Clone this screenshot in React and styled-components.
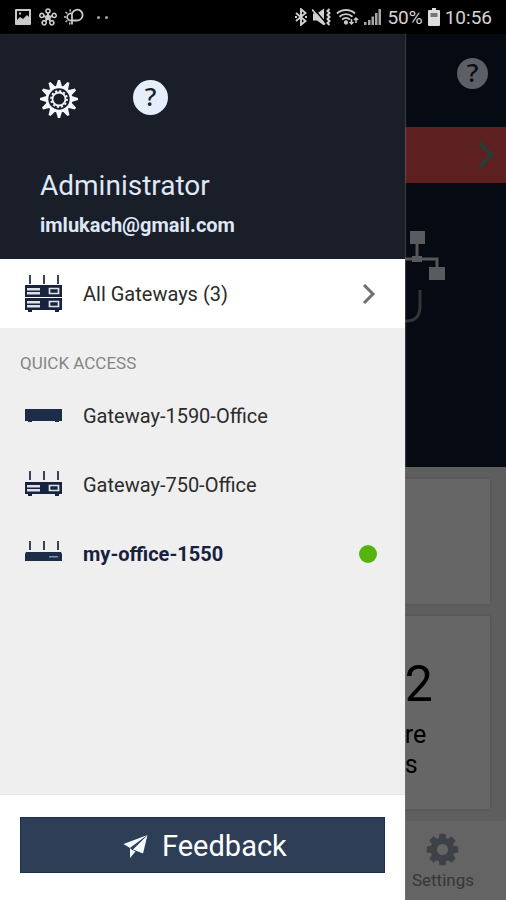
import React from "react";
import styled, { createGlobalStyle } from "styled-components";

const gateways = [
    { name: "Gateway-1590-Office", model: "1590", active: false },
    { name: "Gateway-750-Office", model: "750", active: false },
    { name: "my-office-1550", model: "1550", active: true }
];

const range = (n) => Array.from({ length: n }, (_, i) => i);

function PictureIcon() {
    return (
        <svg width="18" height="18" viewBox="0 0 18 18">
            <path fill="#c9c9c9" fillRule="evenodd" d="M2 1h14a1 1 0 0 1 1 1v14a1 1 0 0 1-1 1H2a1 1 0 0 1-1-1V2a1 1 0 0 1 1-1zM3 3v9l3-3 3 2 4-4 2 2V3zM5 4.500h2v2h-2z" />
        </svg>
    );
}

function FlowerIcon() {
    return (
        <svg width="18" height="18" viewBox="0 0 18 18" fill="none" stroke="#c9c9c9" strokeWidth="1.600">
            {range(5).map((i) => (
                <g key={i} transform={`rotate(${i * 72} 9 9.500)`}>
                    <path d="M9 9.500V5" strokeWidth="2" />
                    <circle cx="9" cy="3" r="2" />
                </g>
            ))}
            <circle cx="9" cy="9.500" r="2" fill="#c9c9c9" />
        </svg>
    );
}

function WeatherIcon() {
    return (
        <svg width="20" height="18" viewBox="0 0 20 18" fill="none" stroke="#c9c9c9" strokeWidth="1.500">
            <path d="M8 16.500V8.500a5.400 5.400 0 1 1 5.200 4H8" strokeWidth="1.800" />
            <path d="M8.500 6a3.500 3.500 0 1 0 0 6" />
            <path d="M0 9h2M1.500 4l1.800 1.500M6 1.500l.5 2M1.500 14l1.800-1.500M5.500 16.500l.5-2" />
        </svg>
    );
}

function BluetoothIcon() {
    return (
        <svg width="12" height="18" viewBox="0 0 12 18" fill="none" stroke="#d0d0d0" strokeWidth="1.900">
            <path d="M1 5l9.500 8L6 16.800V1.200L10.500 5 1 13" />
            <path d="M0 9h2M10 9h2" />
        </svg>
    );
}

function MuteIcon() {
    return (
        <svg width="19" height="18" viewBox="0 0 19 18">
            <path fill="#d0d0d0" d="M1 5.500h4l7-5v17l-7-5H1z" />
            <path stroke="#000" strokeWidth="1.500" d="M2 1l12 14" />
            <path stroke="#d0d0d0" strokeWidth="1.800" d="M0 1.500l13 15" />
            <path fill="none" stroke="#d0d0d0" strokeWidth="2" d="M17.500 1l-2 2 2 2-2 2 2 2-2 2 2 2-2 2 2 2" />
        </svg>
    );
}

function WifiIcon() {
    return (
        <svg width="23" height="18" viewBox="0 0 23 18" fill="none" stroke="#c9c9c9" strokeWidth="1.900">
            <path d="M1 5.500a13.500 13.500 0 0 1 18 0M3.500 8.700a9.500 9.500 0 0 1 13 0M6 11.600a6 6 0 0 1 8 0" />
            <circle cx="10" cy="14.500" r="1.200" fill="#c9c9c9" />
            <path d="M15.500 11v5M13.500 14l2 2 2-2M20 15v-5M18 12l2-2 2 2" strokeWidth="1.500" />
        </svg>
    );
}

function SignalIcon() {
    return (
        <svg width="18" height="18" viewBox="0 0 18 18" fill="#a5a5a5">
            <path d="M0 14h2.500v3H0zM4 12h2.500v5H4zM7.500 8.500H10V17H7.500zM11 5h2.500v12H11zM14.500 1H17v16h-2.500z" />
        </svg>
    );
}

function BatteryIcon() {
    return (
        <svg width="12" height="18" viewBox="0 0 12 18">
            <path fill="#dedede" d="M4 0h4v2h3a1 1 0 0 1 1 1v14a1 1 0 0 1-1 1H1a1 1 0 0 1-1-1V3a1 1 0 0 1 1-1h3z" />
            <path fill="#777" d="M2.500 5h7v4h-7z" />
        </svg>
    );
}

function SunGearIcon() {
    return (
        <svg width="38" height="38" viewBox="0 0 38 38" fill="none" stroke="#f4f8ff">
            <circle cx="19" cy="19" r="12" strokeWidth="2.600" />
            {range(12).map((i) => (
                <path key={i} d="M15.800 7L17.900 0h2.200L22.200 7z" fill="#f4f8ff" stroke="none" transform={`rotate(${i * 30} 19 19)`} />
            ))}
            <circle cx="19" cy="19" r="8" strokeWidth="1.800" strokeDasharray="2.100 2.089" />
            <circle cx="19" cy="19" r="6.500" strokeWidth="1.800" />
        </svg>
    );
}

function CogIcon() {
    return (
        <svg width="33" height="33" viewBox="0 0 33 33">
            {range(8).map((i) => (
                <path key={i} fill="#9ba5b4" d="M12.500 7l1-6.200h6l1 6.200z" transform={`rotate(${i * 45} 16.500 16.500)`} />
            ))}
            <circle cx="16.500" cy="16.500" r="8.800" fill="none" stroke="#9ba5b4" strokeWidth="6.500" />
        </svg>
    );
}

function Chevron({ color, size, weight }) {
    return (
        <svg width={size} height={size} viewBox="0 0 20 20" fill="none" stroke={color} strokeWidth={weight}>
            <path d="M5 1l9 9-9 9" />
        </svg>
    );
}

function PlaneIcon() {
    return (
        <svg width="25" height="25" viewBox="0 0 25 25" fill="#f4f8ff">
            <path d="M24.500 1L.5 10l6.500 4z" />
            <path d="M24.500 1L10 15.500l10 4z" />
            <path d="M7 14v10l5.500-6.500-3.500-1.800z" />
            <path d="M24.500 1L7 14l2.500 1.500z" fill="#2d3e56" opacity="0.6" />
        </svg>
    );
}

function NetworkIcon() {
    return (
        <svg width="60" height="92" viewBox="0 0 60 92" fill="none" stroke="#d6d9e0">
            <path d="M32 12v14M0 28h52v10" strokeWidth="3" />
            <path fill="#e1e4ea" stroke="none" d="M25 0h15v13H25zM27 25h10v6H27zM44 36h16v13H44z" />
            <path d="M35 59v16q0 14-12 15H10" stroke="#82858c" strokeWidth="3" />
        </svg>
    );
}

function DeviceUnit({ y }) {
    return (
        <g>
            <path fill="#17233f" d={`M0 ${y}h37v12H0z`} />
            <path fill="#dde2ea" d={`M2 ${y + 3}h13v2.500H2zM2 ${y + 7}h13v2.500H2z`} />
            <path fill="none" stroke="#dde2ea" strokeWidth="1.700" d={`M24.500 ${y + 3.5}h9v5h-9z`} />
        </g>
    );
}

function Antennas() {
    return <path stroke="#3a4256" strokeWidth="2" d="M5 0v9M19 0v9M33 0v9" />;
}

function DeviceIcon({ model }) {
    if (model === "all") {
        return (
            <svg width="37" height="37" viewBox="0 0 37 37">
                <Antennas />
                <DeviceUnit y={10} />
                <DeviceUnit y={23} />
                <path fill="#17233f" d="M3 35h4v2H3zM30 35h4v2h-4z" />
            </svg>
        );
    }
    if (model === "750") {
        return (
            <svg width="37" height="28" viewBox="0 0 37 28">
                <Antennas />
                <DeviceUnit y={11} />
                <path fill="#17233f" d="M3 23h4v2H3zM30 23h4v2h-4z" />
            </svg>
        );
    }
    if (model === "1550") {
        return (
            <svg width="37" height="26" viewBox="0 0 37 26">
                <Antennas />
                <path fill="#1c2d4a" d="M1 11h35l1 2v7H0v-7z" />
                <path fill="#8592a6" d="M24 15h9v1.500h-9z" />
            </svg>
        );
    }
    return (
        <svg width="37" height="13" viewBox="0 0 37 13">
            <path fill="#1c2d4a" d="M0 0h37v12H0zM3 12h4v1H3zM30 12h4v1h-4z" />
        </svg>
    );
}

export default function App() {
    return (
        <Phone>
            <GlobalStyle />
            <StatusBar>
                <StatusGroup $gap="7px">
                    <PictureIcon />
                    <FlowerIcon />
                    <WeatherIcon />
                    <Dots>
                        <i />
                        <i />
                    </Dots>
                </StatusGroup>
                <StatusGroup $gap="5px">
                    <BluetoothIcon />
                    <MuteIcon />
                    <WifiIcon />
                    <SignalIcon />
                    <span>50%</span>
                    <BatteryIcon />
                    <span>10:56</span>
                </StatusGroup>
            </StatusBar>
            <Stage>
                <Page>
                    <Toolbar>
                        <HelpButton $size="31px">?</HelpButton>
                    </Toolbar>
                    <AlertBar>
                        <Chevron color="#6f8f84" size={28} weight={3} />
                    </AlertBar>
                    <Hero>
                        <NetworkIcon />
                    </Hero>
                    <Cards>
                        <Card />
                        <StatCard>
                            <StatNumber>2</StatNumber>
                            <StatLabel>re<br />s</StatLabel>
                        </StatCard>
                    </Cards>
                    <TabBar>
                        <Tab href="#settings">
                            <CogIcon />
                            Settings
                        </Tab>
                    </TabBar>
                </Page>
                <Scrim />
                <Drawer>
                    <DrawerHeader>
                        <HeaderActions>
                            <IconButton aria-label="Settings">
                                <SunGearIcon />
                            </IconButton>
                            <HelpButton $size="35px">?</HelpButton>
                        </HeaderActions>
                        <UserName>Administrator</UserName>
                        <UserEmail>imlukach@gmail.com</UserEmail>
                    </DrawerHeader>
                    <GatewayRow href="#all" $highlight>
                        <DeviceIcon model="all" />
                        <GatewayName>All Gateways (3)</GatewayName>
                        <Chevron color="#707070" size={20} weight={3} />
                    </GatewayRow>
                    <SectionTitle>QUICK ACCESS</SectionTitle>
                    {gateways.map((gateway) => (
                        <GatewayRow href={"#" + gateway.name} key={gateway.name}>
                            <DeviceIcon model={gateway.model} />
                            <GatewayName $active={gateway.active}>{gateway.name}</GatewayName>
                            {gateway.active && <StatusDot />}
                        </GatewayRow>
                    ))}
                    <DrawerFooter>
                        <FeedbackButton>
                            <PlaneIcon />
                            Feedback
                        </FeedbackButton>
                    </DrawerFooter>
                </Drawer>
            </Stage>
        </Phone>
    );
}

const GlobalStyle = createGlobalStyle`
    * {
        box-sizing: border-box;
    }
    body {
        margin: 0;
        font-family: Roboto, "Liberation Sans", sans-serif;
    }
    svg {
        display: block;
        flex-shrink: 0;
    }
    h1, h2, p {
        margin: 0;
    }
    a {
        color: inherit;
        text-decoration: none;
    }
    button {
        border: none;
        padding: 0;
        font-family: inherit;
        cursor: pointer;
    }
`;

const Phone = styled.div`
    min-height: 100vh;
    display: flex;
    flex-direction: column;
`;

const StatusBar = styled.div`
    height: 34px;
    padding: 0 14px;
    display: flex;
    align-items: center;
    justify-content: space-between;
    background-color: #000000;
    color: #d4d4d4;
    font-size: 19px;
`;

const StatusGroup = styled.div`
    display: flex;
    align-items: center;
    gap: ${(props) => props.$gap};
`;

const Dots = styled.div`
    display: flex;
    gap: 5px;
    padding-left: 6px;
    i {
        width: 3px;
        height: 3px;
        border-radius: 50%;
        background-color: #a8a8a8;
    }
`;

const Stage = styled.div`
    flex: 1;
    display: flex;
    position: relative;
`;

const Page = styled.main`
    flex: 1;
    display: flex;
    flex-direction: column;
    background-color: #ebebeb;
`;

const Toolbar = styled.div`
    height: 93px;
    padding: 24px 18px;
    display: flex;
    justify-content: flex-end;
    background-color: #0f192d;
`;

const AlertBar = styled.div`
    height: 56px;
    padding-right: 6px;
    display: flex;
    align-items: center;
    justify-content: flex-end;
    background-color: #eb4e53;
`;

const Hero = styled.div`
    height: 284px;
    padding: 48px 61px;
    display: flex;
    justify-content: flex-end;
    background-color: #0f192d;
`;

const Cards = styled.div`
    flex: 1;
    padding: 12px 16px;
    display: flex;
    flex-direction: column;
    gap: 12px;
`;

const Card = styled.section`
    height: 125px;
    background-color: #ffffff;
    box-shadow: 0 0 3px rgba(0, 0, 0, 0.2);
`;

const StatCard = styled(Card)`
    flex: 1;
    padding-top: 36px;
    padding-left: 82%;
    display: flex;
    flex-direction: column;
    gap: 4px;
`;

const StatNumber = styled.p`
    font-size: 50px;
    line-height: 64px;
`;

const StatLabel = styled.p`
    font-size: 25px;
    line-height: 30px;
`;

const TabBar = styled.nav`
    height: 79px;
    padding: 0 32px;
    display: flex;
    justify-content: flex-end;
    background-color: #fafafa;
`;

const Tab = styled.a`
    display: flex;
    flex-direction: column;
    align-items: center;
    gap: 4px;
    padding-top: 12px;
    color: #8a8a8a;
    font-size: 17px;
`;

const Scrim = styled.div`
    position: absolute;
    inset: 0;
    background-color: rgba(0, 0, 0, 0.6);
`;

const Drawer = styled.aside`
    position: absolute;
    top: 0;
    bottom: 0;
    left: 0;
    width: 80%;
    display: flex;
    flex-direction: column;
    background-color: #efefef;
    box-shadow: 1px 0 1px rgba(120, 120, 120, 0.4);
`;

const DrawerHeader = styled.header`
    height: 225px;
    padding: 46px 40px 0;
    background-color: #191e29;
    color: #dfe7f7;
`;

const HeaderActions = styled.div`
    display: flex;
    gap: 55px;
    margin-bottom: 50px;
`;

const IconButton = styled.button`
    background: none;
`;

const HelpButton = styled.button`
    width: ${(props) => props.$size};
    height: ${(props) => props.$size};
    padding-bottom: 3px;
    border-radius: 50%;
    background-color: #e6eefc;
    color: #191e29;
    font-family: "Noto Sans", "Open Sans", sans-serif;
    font-size: 26px;
    font-weight: 500;
    line-height: 26px;
`;

const UserName = styled.h1`
    font-size: 28px;
    font-weight: 400;
    line-height: 36px;
`;

const UserEmail = styled.p`
    font-size: 20px;
    font-weight: 700;
    line-height: 42px;
`;

const GatewayRow = styled.a`
    height: 69px;
    padding: 0 26px 0 25px;
    display: flex;
    align-items: center;
    gap: 21px;
    background-color: ${(props) => (props.$highlight ? "#ffffff" : "transparent")};
`;

const GatewayName = styled.span`
    flex: 1;
    font-size: 20px;
    font-weight: ${(props) => (props.$active ? 700 : 400)};
    color: ${(props) => (props.$active ? "#17213f" : "#2b2b2b")};
`;

const SectionTitle = styled.h2`
    padding: 24px 20px 7px;
    font-size: 17px;
    font-weight: 400;
    line-height: 22px;
    color: #858585;
`;

const StatusDot = styled.span`
    width: 18px;
    height: 18px;
    border-radius: 50%;
    margin-right: 2px;
    background-color: #53b40c;
`;

const DrawerFooter = styled.footer`
    margin-top: auto;
    padding: 22px 20px 27px;
    border-top: 1px solid #e4e4e4;
    background-color: #ffffff;
`;

const FeedbackButton = styled.button`
    width: 100%;
    height: 56px;
    padding: 2px 0 0 5px;
    display: flex;
    align-items: center;
    justify-content: center;
    gap: 14px;
    background-color: #2d3e56;
    border: 1px solid #1b3152;
    color: #ffffff;
    font-size: 29px;
`;
